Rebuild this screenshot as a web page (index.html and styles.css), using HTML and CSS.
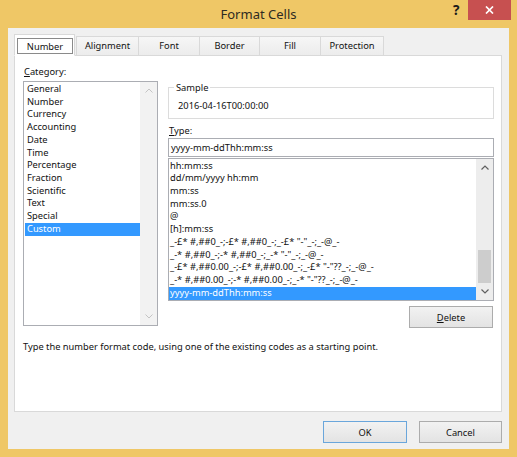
FILE: index.html
```html
<!DOCTYPE html>
<html>
<head>
<meta charset="utf-8">
<title>Format Cells</title>
<link rel="stylesheet" href="styles.css">
</head>
<body>
<div class="window">
  <div class="titlebar">
    <span class="title">Format Cells</span>
    <span class="help-btn">?</span>
    <span class="close-btn"><svg width="9" height="8" viewBox="0 0 9 8"><path d="M1 0.5 L8 7.5 M8 0.5 L1 7.5" stroke="#fff" stroke-width="1.7" fill="none"/></svg></span>
  </div>
  <div class="client">
    <div class="tabs">
      <div class="tab selected"><span class="focus">Number</span></div>
      <div class="tab w-align">Alignment</div>
      <div class="tab w-font">Font</div>
      <div class="tab w-border">Border</div>
      <div class="tab w-fill">Fill</div>
      <div class="tab w-prot">Protection</div>
    </div>
    <div class="panel">
      <div class="panel-row">
        <div class="left-col">
          <div class="label"><u>C</u>ategory:</div>
          <div class="listbox cat">
            <div class="items cat-items">
              <div class="item">General</div>
              <div class="item">Number</div>
              <div class="item">Currency</div>
              <div class="item">Accounting</div>
              <div class="item">Date</div>
              <div class="item">Time</div>
              <div class="item">Percentage</div>
              <div class="item">Fraction</div>
              <div class="item">Scientific</div>
              <div class="item">Text</div>
              <div class="item">Special</div>
              <div class="item sel">Custom</div>
            </div>
            <div class="scrollbar disabled">
              <div class="arrow"><svg width="8" height="5" viewBox="0 0 8 5"><polyline points="0.5,4.5 4,1 7.5,4.5" fill="none" stroke="#c4c4c4" stroke-width="1"/></svg></div>
              <div class="track"></div>
              <div class="arrow"><svg width="8" height="5" viewBox="0 0 8 5"><polyline points="0.5,0.5 4,4 7.5,0.5" fill="none" stroke="#c4c4c4" stroke-width="1"/></svg></div>
            </div>
          </div>
        </div>
        <div class="right-col">
          <div class="group">
            <div class="group-label">Sample</div>
            <div class="sample-value">2016-04-16T00:00:00</div>
          </div>
          <div class="label type-label"><u>T</u>ype:</div>
          <div class="input">yyyy-mm-ddThh:mm:ss</div>
          <div class="listbox fmt">
            <div class="items fmt-items">
              <div class="item">hh:mm:ss</div>
              <div class="item">dd/mm/yyyy hh:mm</div>
              <div class="item">mm:ss</div>
              <div class="item">mm:ss.0</div>
              <div class="item">@</div>
              <div class="item">[h]:mm:ss</div>
              <div class="item">_-£* #,##0_-;-£* #,##0_-;_-£* "-"_-;_-@_-</div>
              <div class="item">_-* #,##0_-;-* #,##0_-;_-* "-"_-;_-@_-</div>
              <div class="item">_-£* #,##0.00_-;-£* #,##0.00_-;_-£* "-"??_-;_-@_-</div>
              <div class="item">_-* #,##0.00_-;-* #,##0.00_-;_-* "-"??_-;_-@_-</div>
              <div class="item sel">yyyy-mm-ddThh:mm:ss</div>
            </div>
            <div class="scrollbar">
              <div class="arrow"><svg width="8" height="5" viewBox="0 0 8 5"><polyline points="0.5,4.5 4,1 7.5,4.5" fill="none" stroke="#606060" stroke-width="1.2"/></svg></div>
              <div class="track"><div class="thumb"></div></div>
              <div class="arrow"><svg width="8" height="5" viewBox="0 0 8 5"><polyline points="0.5,0.5 4,4 7.5,0.5" fill="none" stroke="#606060" stroke-width="1.2"/></svg></div>
            </div>
          </div>
          <div class="btn-row">
            <div class="btn delete"><u>D</u>elete</div>
          </div>
        </div>
      </div>
      <div class="help-text">Type the number format code, using one of the existing codes as a starting point.</div>
    </div>
    <div class="buttons">
      <div class="btn ok">OK</div>
      <div class="btn cancel">Cancel</div>
    </div>
  </div>
</div>
</body>
</html>
```
FILE: styles.css
```css
* { box-sizing: border-box; }
html, body { margin: 0; padding: 0; }
body {
  width: 517px;
  height: 457px;
  overflow: hidden;
  font-family: "Noto Sans", "Open Sans", sans-serif;
  font-size: 9.3px;
  color: #111;
  background: #EFC766;
}
.window {
  width: 517px;
  height: 457px;
  display: flex;
  flex-direction: column;
  background: #EFC766;
}
.titlebar {
  height: 28px;
  position: relative;
  display: flex;
  justify-content: center;
  align-items: center;
}
.title {
  font-size: 13px;
  color: #2e2a22;
  padding-bottom: 1px;
}
.help-btn {
  position: absolute;
  left: 453px;
  top: 1px;
  font-size: 13.5px;
  font-weight: bold;
  color: #1a1a1a;
  line-height: 18px;
}
.close-btn {
  position: absolute;
  left: 468px;
  top: 0;
  width: 43px;
  height: 20px;
  background: #C75050;
  display: flex;
  align-items: center;
  justify-content: center;
}
.client {
  margin: 0 8px 8px 8px;
  flex: 1;
  background: #F0F0F0;
  display: flex;
  flex-direction: column;
  padding: 6px 7px 0 6px;
}
.tabs {
  height: 22px;
  display: flex;
  align-items: flex-end;
  margin-bottom: -1px;
  position: relative;
  z-index: 1;
}
.tab {
  height: 20px;
  border: 1px solid #D9D9D9;
  background: linear-gradient(#F6F6F6, #ECECEC);
  display: flex;
  align-items: center;
  justify-content: center;
  margin-left: -1px;
  padding-bottom: 1px;
}
.tab.selected {
  height: 22px;
  width: 61px;
  margin-left: 0;
  margin-right: 2px;
  background: #fff;
  border-bottom-color: #fff;
  align-items: flex-start;
  justify-content: flex-start;
  padding: 3px 0 0 2px;
}
.focus {
  width: 56px;
  height: 16px;
  border: 1px solid #8a8a8a;
  display: flex;
  align-items: center;
  justify-content: center;
}
.w-align { width: 63px; }
.w-font { width: 62px; }
.w-border { width: 61px; }
.w-fill { width: 62px; }
.w-prot { width: 64px; }
.panel {
  height: 357px;
  background: #fff;
  border: 1px solid #D9D9D9;
  display: flex;
  flex-direction: column;
}
.panel-row {
  display: flex;
  gap: 10px;
  padding: 9px 7px 0 8px;
}
.left-col {
  width: 135px;
  display: flex;
  flex-direction: column;
}
.right-col {
  flex: 1;
  display: flex;
  flex-direction: column;
}
.label {
  line-height: 13px;
  height: 13px;
  padding-left: 1px;
}
.left-col .label { margin-bottom: 3px; }
.listbox {
  border: 1px solid #ABADB3;
  display: flex;
  background: #fff;
}
.listbox.cat { height: 245px; }
.listbox.fmt { height: 143px; margin-top: 1px; }
.items {
  flex: 1;
  overflow: hidden;
  padding: 1px 0 0 1px;
}
.fmt-items { padding: 0.6px 0 0 0; }
.item {
  height: 12.73px;
  line-height: 12.73px;
  padding-left: 2px;
  white-space: nowrap;
}
.fmt-items .item { padding-left: 1px; }
.item.sel {
  background: #3399FF;
  color: #fff;
}
.scrollbar {
  width: 17px;
  background: #EDEDED;
  display: flex;
  flex-direction: column;
}
.scrollbar.disabled { background: #F2F2F2; }
.arrow {
  height: 17px;
  display: flex;
  align-items: center;
  justify-content: center;
}
.track {
  flex: 1;
  display: flex;
  flex-direction: column;
  justify-content: flex-end;
  padding: 0 2px;
}
.thumb {
  height: 33px;
  background: #CDCDCD;
}
.group {
  margin-top: 22px;
  height: 32px;
  border: 1px solid #DCDCDC;
}
.group-label {
  width: fit-content;
  margin: -7px 0 0 5px;
  padding: 0 2px;
  background: #fff;
  line-height: 13px;
  height: 13px;
}
.sample-value {
  margin-top: 5px;
  line-height: 13px;
  padding-left: 9px;
}
.type-label { margin-top: 5px; }
.input {
  margin-top: 1px;
  height: 19px;
  border: 1px solid #ABADB3;
  line-height: 17px;
  padding-left: 2px;
}
.btn-row {
  display: flex;
  justify-content: flex-end;
  margin-top: 5px;
  padding-right: 1px;
}
.btn {
  height: 22px;
  border: 1px solid #ACACAC;
  background: linear-gradient(#F2F2F2, #E3E3E3);
  display: flex;
  align-items: center;
  justify-content: center;
}
.delete { width: 84px; }
.help-text {
  margin-top: 12px;
  padding-left: 8px;
  line-height: 13px;
}
.buttons {
  display: flex;
  justify-content: flex-end;
  gap: 12px;
  margin-top: 9px;
}
.ok {
  width: 84px;
  border-color: #6AA6DB;
}
.cancel { width: 83px; }
```
